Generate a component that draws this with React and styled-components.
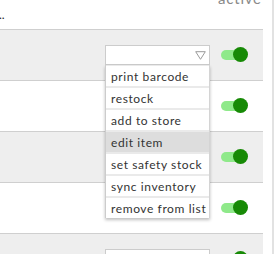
import React from "react";
import styled, { createGlobalStyle } from "styled-components";

const GlobalStyle = createGlobalStyle`
  body {
    margin: 0;
    background: #ffffff;
    font-family: "Lato", "Liberation Sans", sans-serif;
    overflow: hidden;
  }
`;

const Page = styled.div`
  display: flex;
  width: 278px;
  height: 254px;
  overflow: hidden;
`;

const Table = styled.div`
  width: 263px;
  flex-shrink: 0;
  display: flex;
  flex-direction: column;
`;

const Divider = styled.div`
  width: 2px;
  margin-left: 9px;
  background: #e2e2e2;
`;

const Header = styled.div`
  height: 29px;
  flex-shrink: 0;
  border-bottom: 1px solid #cfcfcf;
  position: relative;
`;

const Ellipsis = styled.span`
  position: absolute;
  left: -1px;
  top: 7px;
  font-size: 12px;
  color: #222;
`;

const ActiveLabel = styled.span`
  position: absolute;
  left: 218px;
  top: -11px;
  font-size: 15px;
  color: #8a8a8a;
  letter-spacing: 0.8px;
`;

const Row = styled.div`
  position: relative;
  height: 35px;
  flex-shrink: 0;
  border-bottom: 1px solid #cfcfcf;
  background: ${(p) => (p.$shaded ? "#eeeeee" : "#ffffff")};
  display: flex;
  align-items: flex-start;
  justify-content: flex-end;
  padding: 15px 15px 0 0;
  gap: 11px;
`;

const SelectWrap = styled.div`
  position: relative;
  width: 105px;
`;

const SelectBox = styled.div`
  height: 20px;
  box-sizing: border-box;
  border: 1px solid #cccccc;
  background: #fff;
  display: flex;
  justify-content: flex-end;
  align-items: center;
  padding-right: 3px;
`;

const Menu = styled.ul`
  position: absolute;
  top: 20px;
  left: 0;
  width: 105px;
  margin: 0;
  padding: 0;
  list-style: none;
  background: #eaeaea;
  border-left: 1px solid #cccccc;
  border-right: 1px solid #d4d4d4;
  box-sizing: border-box;
  box-shadow: 0 2px 3px rgba(0, 0, 0, 0.25);
  z-index: 5;
`;

const MenuItem = styled.li`
  height: 20px;
  line-height: 21px;
  margin-top: 2px;
  padding-left: 5px;
  font-size: 12px;
  color: #333;
  letter-spacing: 0.6px;
  background: ${(p) => (p.$active ? "#dddddd" : "#ffffff")};
  white-space: nowrap;

  &:first-child {
    margin-top: 1px;
  }
`;

const Toggle = styled.div`
  position: relative;
  width: 27px;
  height: 15px;
  margin-top: 2px;
  flex-shrink: 0;
`;

const Track = styled.div`
  position: absolute;
  left: 0;
  top: 3px;
  width: 22px;
  height: 10px;
  border-radius: 5px;
  background: #8fe98a;
`;

const Knob = styled.div`
  position: absolute;
  right: 0;
  top: 0;
  width: 15px;
  height: 15px;
  border-radius: 50%;
  background: #178a06;
`;

const Caret = () => (
  <svg width="11" height="9" viewBox="0 0 11 9">
    <path d="M0.7 0.7 H10.3 L5.5 8.3 Z" fill="none" stroke="#9a9a9a" strokeWidth="1" />
  </svg>
);

const actions = [
  "print barcode",
  "restock",
  "add to store",
  "edit item",
  "set safety stock",
  "sync inventory",
  "remove from list",
];

const rows = [0, 1, 2, 3, 4];

export default function App() {
  return (
    <Page>
      <GlobalStyle />
      <Table>
        <Header>
          <Ellipsis>..</Ellipsis>
          <ActiveLabel>active</ActiveLabel>
        </Header>
        {rows.map((r) => (
          <Row key={r} $shaded={r % 2 === 0} style={{ zIndex: r === 0 ? 2 : 1 }}>
            <SelectWrap>
              <SelectBox>{r === 0 && <Caret />}</SelectBox>
              {r === 0 && (
                <Menu>
                  {actions.map((a) => (
                    <MenuItem key={a} $active={a === "edit item"}>
                      {a}
                    </MenuItem>
                  ))}
                </Menu>
              )}
            </SelectWrap>
            <Toggle>
              <Track />
              <Knob />
            </Toggle>
          </Row>
        ))}
      </Table>
      <Divider />
    </Page>
  );
}
